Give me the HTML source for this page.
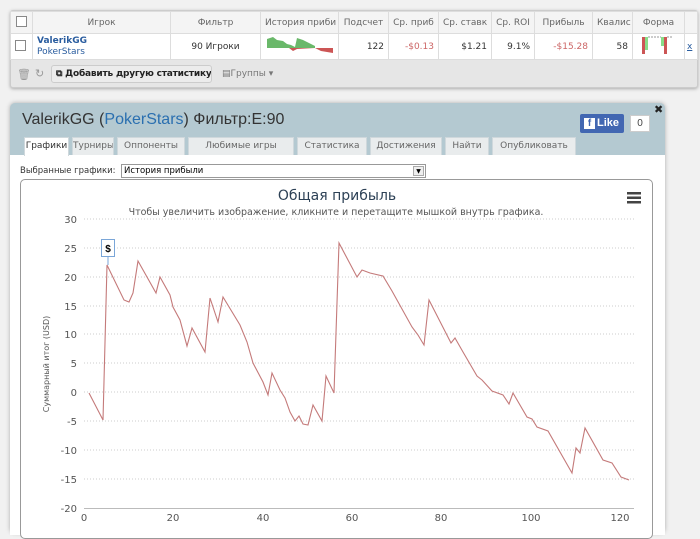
<!DOCTYPE html>
<html><head><meta charset="utf-8"><style>
*{box-sizing:border-box}
body{margin:0;width:700px;height:527px;overflow:hidden;background:#f1f1f1;font-family:"Liberation Sans","DejaVu Sans",sans-serif;position:relative}
.abs{position:absolute}
table{border-collapse:collapse;font-family:"DejaVu Sans",sans-serif;font-size:9px}
td{border:1px solid #ddd;padding:0 4px;white-space:nowrap;overflow:hidden}
.hd td{background:#f4f4f4;color:#666;text-align:center;height:22px}
.rw td{background:#fff;height:26px;color:#333}
.cb{display:inline-block;width:11px;height:11px;border:1px solid #888;background:#fff}
.tab{position:absolute;top:137px;height:18px;background:#e9eced;border:1px solid #cfd8dc;border-bottom:none;font-size:9px;color:#666;text-align:center;line-height:17px;font-family:"DejaVu Sans",sans-serif;white-space:nowrap;overflow:hidden}
</style></head><body>
<div class="abs" style="left:10px;top:10px;width:688px;height:78px;background:#e6e6e6;border:1px solid #ccc;border-radius:3px;box-shadow:0 1px 3px #aaa"></div>
<table class="abs" style="left:10px;top:11px;width:687px;table-layout:fixed">
<colgroup><col style="width:22px"><col style="width:138px"><col style="width:90px"><col style="width:78px"><col style="width:50px"><col style="width:50px"><col style="width:53px"><col style="width:43px"><col style="width:58px"><col style="width:40px"><col style="width:52px"><col style="width:13px"></colgroup>
<tr class="hd"><td><span class="cb"></span></td><td>Игрок</td><td>Фильтр</td><td>История приби</td><td>Подсчет</td><td>Ср. приб</td><td>Ср. ставк</td><td>Ср. ROI</td><td>Прибыль</td><td>Квалис</td><td>Форма</td><td></td></tr>
<tr class="rw"><td><span class="cb"></span></td><td style="line-height:11px"><b style="color:#2a5d9f">ValerikGG</b><br><span style="color:#2a5d9f">PokerStars</span></td><td style="text-align:center">90 Игроки</td>
<td><svg width="70" height="20"><path d="M2 4 L8 2 L12 5 L18 6 L22 9 L26 10 L30 12 L32 3 L38 5 L44 8 L50 11 L50 13 L2 13Z" fill="#6ab86a"/><path d="M24 13 L28 16 L32 14 L50 13 L56 16 L62 17 L68 18 L68 13Z" fill="#c55"/></svg></td>
<td style="text-align:right">122</td><td style="text-align:right;color:#c66">-$0.13</td><td style="text-align:right">$1.21</td><td style="text-align:right">9.1%</td><td style="text-align:right;color:#c66">-$15.28</td><td style="text-align:right">58</td>
<td><svg width="40" height="22"><rect x="5" y="3" width="3" height="17" fill="#c55"/><rect x="8" y="3" width="3" height="13" fill="#8d8"/><rect x="24" y="3" width="3" height="9" fill="#8d8"/><rect x="27" y="3" width="3" height="17" fill="#c55"/><path d="M11 3h13M30 3h6" stroke="#999" stroke-dasharray="2 1"/></svg></td>
<td style="color:#2a5d9f;text-decoration:underline;padding:0 2px">x</td></tr>
</table>
<div class="abs" style="left:17px;top:68px;font-size:11px;color:#999">🗑</div>
<div class="abs" style="left:35px;top:67px;font-size:11px;color:#999">↻</div>
<div class="abs" style="left:51px;top:65px;width:161px;height:18px;border:1px solid #ccc;border-radius:3px;background:#ececec;font-size:9px;line-height:16px;padding-left:4px;color:#222;font-family:'DejaVu Sans',sans-serif;white-space:nowrap;overflow:hidden;font-weight:bold;letter-spacing:-0.2px">⧉ Добавить другую статистику</div>
<div class="abs" style="left:222px;top:69px;font-size:9px;color:#777;font-family:'DejaVu Sans',sans-serif">▤Группы ▾</div>

<div class="abs" style="left:10px;top:103px;width:655px;height:430px;background:#b4c9d1;border-radius:5px;box-shadow:0 0 4px #aaa"></div>
<div class="abs" style="left:10px;top:155px;width:655px;height:380px;background:#fff"></div>
<div class="abs" style="left:22px;top:111px;font-size:16px;color:#333">ValerikGG (<span style="color:#2a6fb0">PokerStars</span>) Фильтр:E:90</div>
<div class="abs" style="left:580px;top:114px;width:44px;height:19px;background:#4267b2;border-radius:2px;color:#fff;font-size:11px;font-weight:bold;line-height:19px"><span style="display:inline-block;background:#fff;color:#4267b2;width:11px;height:11px;margin:4px 2px 0 4px;line-height:12px;text-align:center;font-size:10px;vertical-align:top">f</span>Like</div>
<div class="abs" style="left:630px;top:115px;width:20px;height:17px;background:#fff;border:1px solid #ccc;font-size:10px;text-align:center;line-height:15px;color:#444">0</div>
<div class="abs" style="left:654px;top:103px;font-size:11px;font-weight:bold;color:#222">✖</div>
<div class="tab" style="left:24px;width:45px;background:#fff;color:#333;height:19px">Графики</div>
<div class="tab" style="left:72px;width:42px">Турниры</div>
<div class="tab" style="left:117px;width:68px">Оппоненты</div>
<div class="tab" style="left:188px;width:106px">Любимые игры</div>
<div class="tab" style="left:297px;width:70px">Статистика</div>
<div class="tab" style="left:370px;width:72px">Достижения</div>
<div class="tab" style="left:445px;width:44px">Найти</div>
<div class="tab" style="left:492px;width:84px">Опубликовать</div>
<div class="abs" style="left:20px;top:166px;font-size:8.5px;color:#333;font-family:'DejaVu Sans',sans-serif">Выбранные графики:</div>
<div class="abs" style="left:121px;top:164px;width:305px;height:14px;border:1px solid #999;background:#fff;font-size:8.5px;padding-left:2px;line-height:12px;font-family:'DejaVu Sans',sans-serif">История прибыли<span style="position:absolute;right:1px;top:1px;width:11px;height:10px;border:1px solid #aaa;background:#eee;font-size:6px;text-align:center;line-height:9px">▼</span></div>
<div class="abs" style="left:20px;top:179px;width:633px;height:360px;border:1px solid #999;border-radius:5px;background:#fff"></div>
<svg class="abs" style="left:0;top:0" width="700" height="527">
<text x="337" y="200" font-size="14" fill="#2d4156" text-anchor="middle" font-family="DejaVu Sans">Общая прибыль</text>
<text x="336" y="215" font-size="9.5" fill="#555" text-anchor="middle" font-family="DejaVu Sans">Чтобы увеличить изображение, кликните и перетащите мышкой внутрь графика.</text>
<g fill="#444"><rect x="627" y="192" width="14" height="2.5"/><rect x="627" y="196.5" width="14" height="2.5"/><rect x="627" y="201" width="14" height="2.5"/></g>
<g stroke="#ccc" stroke-dasharray="1 2"><line x1="84" x2="634" y1="219" y2="219"/><line x1="84" x2="634" y1="248" y2="248"/><line x1="84" x2="634" y1="277" y2="277"/><line x1="84" x2="634" y1="306" y2="306"/><line x1="84" x2="634" y1="334" y2="334"/><line x1="84" x2="634" y1="363" y2="363"/><line x1="84" x2="634" y1="392" y2="392"/><line x1="84" x2="634" y1="421" y2="421"/><line x1="84" x2="634" y1="450" y2="450"/><line x1="84" x2="634" y1="479" y2="479"/></g>
<line x1="84" x2="634" y1="508.5" y2="508.5" stroke="#bbb"/>
<g font-size="10" fill="#555" text-anchor="end" font-family="DejaVu Sans"><text x="77" y="223">30</text><text x="77" y="252">25</text><text x="77" y="281">20</text><text x="77" y="310">15</text><text x="77" y="338">10</text><text x="77" y="367">5</text><text x="77" y="396">0</text><text x="77" y="425">-5</text><text x="77" y="454">-10</text><text x="77" y="483">-15</text><text x="77" y="512">-20</text></g>
<g font-size="10" fill="#555" text-anchor="middle" font-family="DejaVu Sans"><text x="84" y="521">0</text><text x="173" y="521">20</text><text x="263" y="521">40</text><text x="352" y="521">60</text><text x="441" y="521">80</text><text x="531" y="521">100</text><text x="620" y="521">120</text></g>
<text transform="translate(49,364) rotate(-90)" font-size="8" fill="#555" text-anchor="middle" font-family="DejaVu Sans">Суммарный итог (USD)</text>
<polyline fill="none" stroke="#c47a7a" stroke-width="1.1" points="89,393 103,420 107,265 124,300 129,302 133,293 138,261 156,293 160,277 170,295 173,307 180,320 187,346 192,328 205,352 210,298 218,322 223,297 240,325 247,342 253,363 263,382 268,395 272,373 280,390 285,398 290,412 295,421 299,416 303,424 308,425 313,405 322,421 326,376 334,393 339,243 357,277 362,270 370,273 383,276 392,291 412,327 418,335 424,345 429,300 451,343 455,338 463,352 477,376 482,380 492,391 503,395 509,404 513,393 527,417 532,419 537,427 548,431 572,473 576,448 580,453 585,428 603,460 612,463 621,477 629,480"/>
<line x1="108" y1="256" x2="108" y2="265" stroke="#7aa6d8"/>
<rect x="101.5" y="239.5" width="13" height="17" fill="#fff" stroke="#7aa6d8"/>
<text x="108" y="252" font-size="10" font-weight="bold" text-anchor="middle" fill="#000">$</text>
</svg>
</body></html>
